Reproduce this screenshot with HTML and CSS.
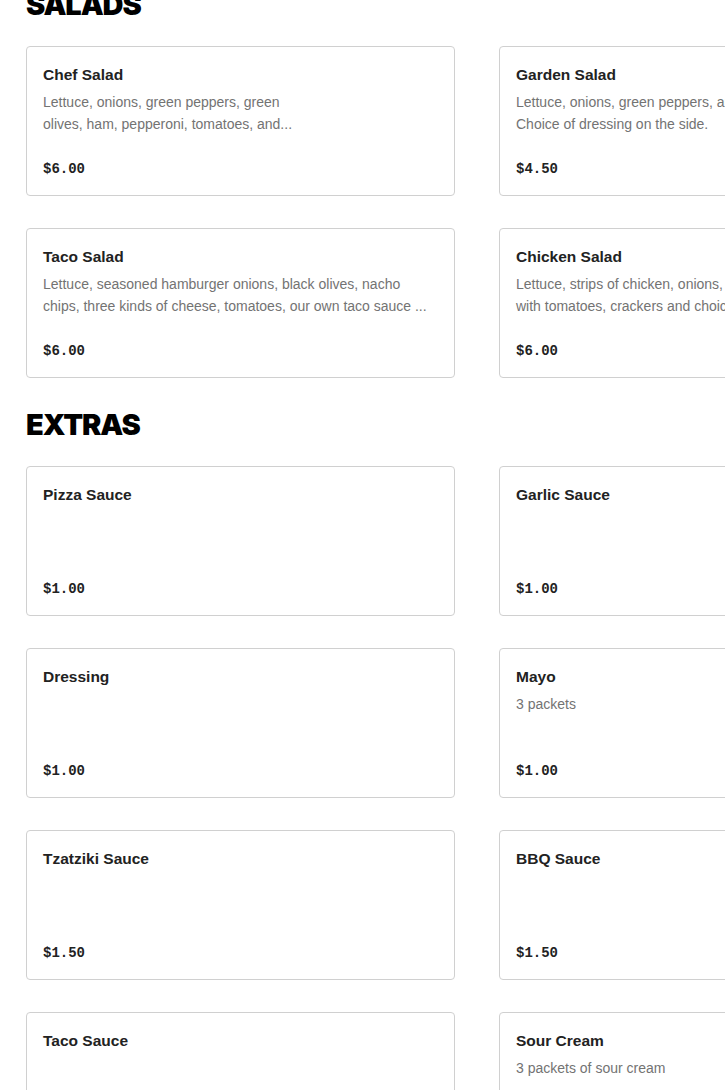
FILE: index.html
```html
<!DOCTYPE html>
<html>
<head>
<meta charset="utf-8">
<link rel="stylesheet" href="styles.css">
</head>
<body>
<main class="menu">
  <section class="section first">
    <h2 class="section-title">SALADS</h2>
    <div class="grid">
      <div class="card">
        <h3 class="item-name">Chef Salad</h3>
        <p class="item-desc">Lettuce, onions, green peppers, green<br>olives, ham, pepperoni, tomatoes, and...</p>
        <div class="price">$6.00</div>
      </div>
      <div class="card">
        <h3 class="item-name">Garden Salad</h3>
        <p class="item-desc"><span class="nowrap">Lettuce, onions, green peppers, and tomatoes.</span><br>Choice of dressing on the side.</p>
        <div class="price">$4.50</div>
      </div>
      <div class="card">
        <h3 class="item-name">Taco Salad</h3>
        <p class="item-desc">Lettuce, seasoned hamburger onions, black olives, nacho<br>chips, three kinds of cheese, tomatoes, our own taco sauce ...</p>
        <div class="price">$6.00</div>
      </div>
      <div class="card">
        <h3 class="item-name">Chicken Salad</h3>
        <p class="item-desc"><span class="nowrap">Lettuce, strips of chicken, onions, green peppers</span><br><span class="nowrap">with tomatoes, crackers and choice of dressing.</span></p>
        <div class="price">$6.00</div>
      </div>
    </div>
  </section>
  <section class="section">
    <h2 class="section-title">EXTRAS</h2>
    <div class="grid">
      <div class="card">
        <h3 class="item-name">Pizza Sauce</h3>
        <div class="price">$1.00</div>
      </div>
      <div class="card">
        <h3 class="item-name">Garlic Sauce</h3>
        <div class="price">$1.00</div>
      </div>
      <div class="card">
        <h3 class="item-name">Dressing</h3>
        <div class="price">$1.00</div>
      </div>
      <div class="card">
        <h3 class="item-name">Mayo</h3>
        <p class="item-desc">3 packets</p>
        <div class="price">$1.00</div>
      </div>
      <div class="card">
        <h3 class="item-name">Tzatziki Sauce</h3>
        <div class="price">$1.50</div>
      </div>
      <div class="card">
        <h3 class="item-name">BBQ Sauce</h3>
        <div class="price">$1.50</div>
      </div>
      <div class="card">
        <h3 class="item-name">Taco Sauce</h3>
        <div class="price">$1.00</div>
      </div>
      <div class="card">
        <h3 class="item-name">Sour Cream</h3>
        <p class="item-desc">3 packets of sour cream</p>
        <div class="price">$1.00</div>
      </div>
    </div>
  </section>
</main>
</body>
</html>
```
FILE: styles.css
```css
html, body {
  margin: 0;
  padding: 0;
  overflow: hidden;
  background: #ffffff;
}
body {
  font-family: "Liberation Sans", Arial, sans-serif;
  color: #222222;
}
.menu {
  padding: 0 0 0 26px;
  width: 1000px;
}
.section {
  margin-top: 30px;
}
.section.first {
  margin-top: -12px;
}
.section-title {
  margin: 0 0 24px 0;
  font-family: "Inter", sans-serif;
  font-weight: 900;
  font-size: 29px;
  line-height: 34px;
  color: #000000;
  letter-spacing: -1.1px;
}
.grid {
  display: grid;
  grid-template-columns: 429px 429px;
  column-gap: 44px;
  row-gap: 32px;
}
.card {
  box-sizing: border-box;
  height: 150px;
  border: 1px solid #d0d0d0;
  border-radius: 4px;
  padding: 16px 16px 15px 16px;
  display: flex;
  flex-direction: column;
  overflow: hidden;
}
.item-name {
  margin: 0 0 4px 0;
  font-size: 15.5px;
  line-height: 24px;
  font-weight: 700;
  color: #222222;
}
.item-desc {
  margin: 0;
  font-size: 14px;
  line-height: 22px;
  color: #737373;
  white-space: nowrap;
}
.nowrap {
  white-space: nowrap;
}
.price {
  margin-top: auto;
  font-family: "Liberation Mono", "Courier New", monospace;
  font-weight: 700;
  font-size: 14px;
  line-height: 22px;
  color: #222222;
}
```
